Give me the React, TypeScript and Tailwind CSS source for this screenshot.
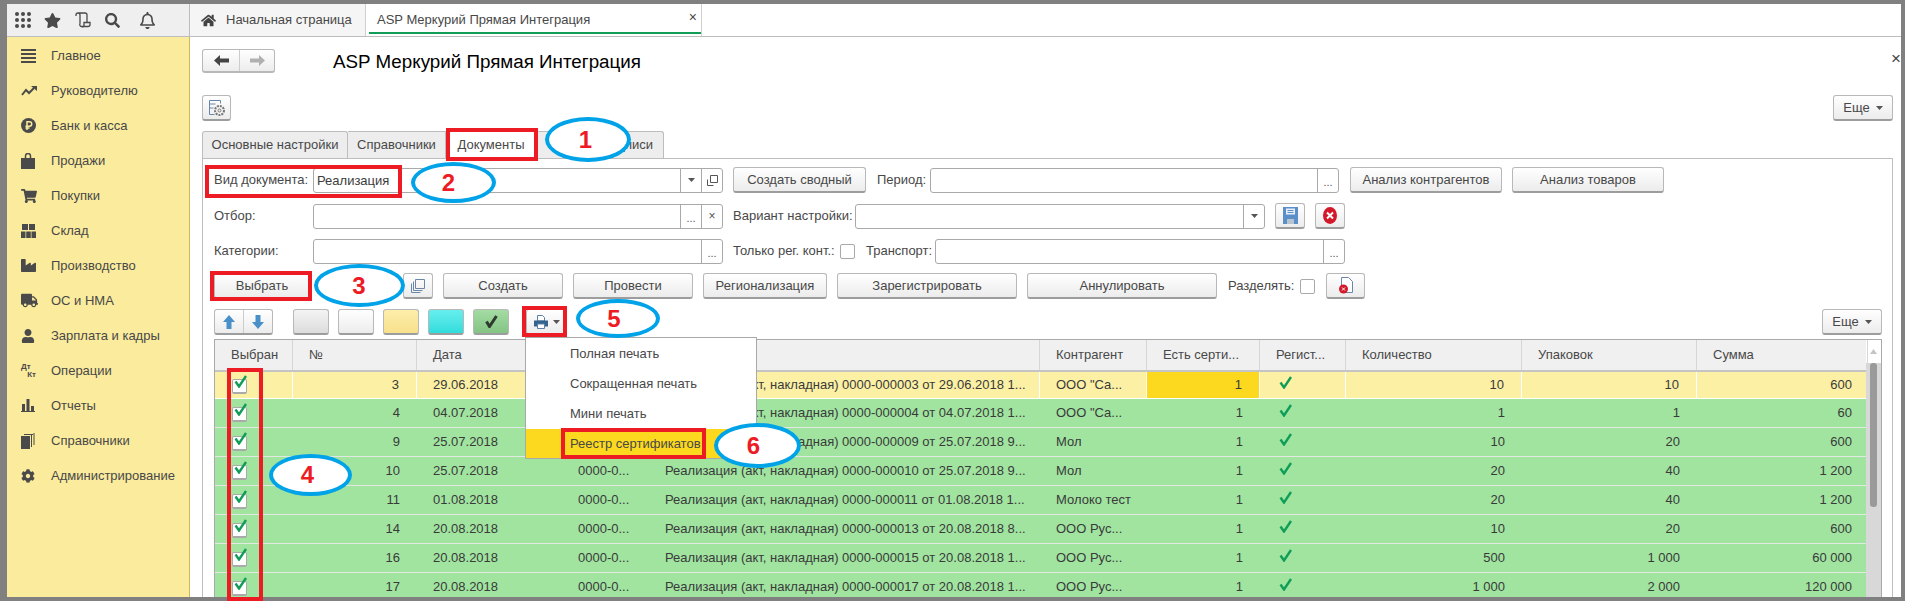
import React from 'react';
import { FaCog, FaHome, FaIndustry, FaSearch, FaShoppingCart, FaStar, FaTruck, FaUser, FaRegBell } from 'react-icons/fa';

const ICON = 'text-[#4a4a4a]';

const Caret = () => (
  <svg width="7" height="4" viewBox="0 0 7 4" className="shrink-0"><path d="M0 0h7L3.500 4z" fill="#555" /></svg>
);

const Check = () => (
  <svg width="14" height="13" viewBox="0 0 14 13"><path d="M1.500 6.500 5 11.500 12 1" fill="none" stroke="#0f9d58" strokeWidth="2.400" /></svg>
);

const sideItems: { label: string; icon: React.ReactNode }[] = [
  { label: 'Главное', icon: <svg width="15" height="14" viewBox="0 0 15 14" fill="#4a4a4a"><path d="M0 0h15v2H0zM0 4h15v2H0zM0 8h15v2H0zM0 12h15v2H0z" /></svg> },
  { label: 'Руководителю', icon: <svg width="16" height="10" viewBox="0 0 16 10"><path d="M1 9l4-5 3 3 5-5" fill="none" stroke="#4a4a4a" strokeWidth="2" /><path d="M10 0h6v5z" fill="#4a4a4a" /></svg> },
  { label: 'Банк и касса', icon: <svg width="15" height="15" viewBox="0 0 15 15"><circle cx="7.500" cy="7.500" r="7.500" fill="#4a4a4a" /><path d="M6 12V3.800h2.500a2 2 0 0 1 0 4.400H4.500M4.500 10h4" fill="none" stroke="#fbeb9d" strokeWidth="1.500" /></svg> },
  { label: 'Продажи', icon: <svg width="14" height="16" viewBox="0 0 14 16"><path d="M0 5h14v11H0z" fill="#4a4a4a" /><path d="M4.500 7V3a2.500 2.500 0 0 1 5 0v4" fill="none" stroke="#4a4a4a" strokeWidth="1.500" /></svg> },
  { label: 'Покупки', icon: <FaShoppingCart size={16} className={ICON} /> },
  { label: 'Склад', icon: <svg width="15" height="14" viewBox="0 0 15 14" fill="#4a4a4a"><path d="M1 0h6v6H1zM8 0h6v6H8zM0 7.500h4.500V14H0zM5.200 7.500h4.600V14H5.200zM10.500 7.500H15V14h-4.500z" /></svg> },
  { label: 'Производство', icon: <FaIndustry size={15} className={ICON} /> },
  { label: 'ОС и НМА', icon: <FaTruck size={17} className={ICON} /> },
  { label: 'Зарплата и кадры', icon: <FaUser size={14} className={ICON} /> },
  { label: 'Операции', icon: <div className="w-[15px] text-[8px] leading-[8px] font-bold text-[#4a4a4a]"><div>Дт</div><div className="text-right">Кт</div></div> },
  { label: 'Отчеты', icon: <svg width="14" height="13" viewBox="0 0 14 13" fill="#4a4a4a"><path d="M0 12h14v1H0zM1 5h3v7H1zM5.500 0h3v12h-3zM10 7h3v5h-3z" /></svg> },
  { label: 'Справочники', icon: <svg width="14" height="16" viewBox="0 0 14 16" fill="#4a4a4a"><path d="M0 3h9v13H0z" /><path d="M10 2h1v12h-1zM12.500 0h1v12h-1zM3 1h9v1H3z" /></svg> },
  { label: 'Администрирование', icon: <FaCog size={14} className={ICON} /> },
];

const Btn = ({ className = '', tone = 'from-white to-[#ececec]', children }: { className?: string; tone?: string; children?: React.ReactNode }) => (
  <div className={`h-[26px] shrink-0 flex items-center justify-center rounded-[3px] border border-[#b8b8b8] border-b-2 border-b-[#9d9d9d] bg-linear-to-b text-[#484848] ${tone} ${className}`}>
    {children}
  </div>
);

const Field = ({ className = '', text, btns = [] }: { className?: string; text?: string; btns?: string[] }) => (
  <div className={`h-[25px] shrink-0 flex rounded-[3px] border border-[#a9a9a9] bg-white ${className}`}>
    <div className="flex-1 px-[3px] leading-[23px] text-[#3c3c3c]">{text}</div>
    {btns.map((b, i) => (
      <div key={i} className="w-[21px] border-l border-[#a9a9a9] flex items-center justify-center text-[#555]">
        {b === 'caret' && <Caret />}
        {b === 'dots' && <span className="text-[11px] leading-[11px] mt-[5px]">...</span>}
        {b === 'x' && <span className="text-[12px] leading-[12px]">×</span>}
        {b === 'open' && (
          <svg width="11" height="11" viewBox="0 0 11 11" fill="none" stroke="#555"><path d="M3.500.5h7v7h-7zM.5 4.500v6h6" /></svg>
        )}
      </div>
    ))}
  </div>
);

const Box = () => <div className="w-[15px] h-[15px] shrink-0 rounded-[2px] border border-[#a9a9a9] bg-white" />;

const Label = ({ className = '', children }: { className?: string; children: React.ReactNode }) => (
  <div className={`shrink-0 whitespace-nowrap text-[#484848] ${className}`}>{children}</div>
);

const GRID = 'grid grid-cols-[78px_124px_150px_86px_387px_107px_113px_86px_176px_175px_171px]';

const DOC = 'Реализация (акт, накладная) ';
const rows = [
  ['3', '29.06.2018', DOC + '0000-000003 от 29.06.2018 1...', 'ООО "Са...', '10', '10', '600'],
  ['4', '04.07.2018', DOC + '0000-000004 от 04.07.2018 1...', 'ООО "Са...', '1', '1', '60'],
  ['9', '25.07.2018', DOC + '0000-000009 от 25.07.2018 9...', 'Мол', '10', '20', '600'],
  ['10', '25.07.2018', DOC + '0000-000010 от 25.07.2018 9...', 'Мол', '20', '40', '1 200'],
  ['11', '01.08.2018', DOC + '0000-000011 от 01.08.2018 1...', 'Молоко тест', '20', '40', '1 200'],
  ['14', '20.08.2018', DOC + '0000-000013 от 20.08.2018 8...', 'ООО Рус...', '10', '20', '600'],
  ['16', '20.08.2018', DOC + '0000-000015 от 20.08.2018 1...', 'ООО Рус...', '500', '1 000', '60 000'],
  ['17', '20.08.2018', DOC + '0000-000017 от 20.08.2018 1...', 'ООО Рус...', '1 000', '2 000', '120 000'],
];

const headers = ['Выбран', '№', 'Дата', '', '', 'Контрагент', 'Есть серти...', 'Регист...', 'Количество', 'Упаковок', 'Сумма'];

const Row = ({ r, first }: { r: string[]; first: boolean }) => {
  const sep = first ? 'border-r border-white' : '';
  const cell = `flex items-center whitespace-nowrap overflow-hidden ${sep}`;
  const num = `${cell} justify-end pr-[17px]`;
  return (
    <div className={`${GRID} ${first ? 'h-[27px] bg-[#fcf0a4] border-b border-white' : 'h-[29px] bg-[#a0e4a0] border-b border-[#e2e8e2]'} text-[#3a3a3a]`}>
      <div className={`${cell} pl-[17px] pt-[3px]`}>
        <div className="relative w-[15px] h-[15px] rounded-[2px] border border-[#aaa] border-b-2 bg-white">
          <div className="absolute left-[1px] top-[-5px]"><Check /></div>
        </div>
      </div>
      <div className={num}>{r[0]}</div>
      <div className={`${cell} pl-4`}>{r[1]}</div>
      <div className={`${cell} pl-[11px]`}>0000-0...</div>
      <div className={`${cell} pl-3`}>{r[2]}</div>
      <div className={`${cell} pl-4`}>{r[3]}</div>
      <div className={`${num} ${first ? 'bg-[#fcd91f]' : ''}`}>1</div>
      <div className={`${cell} pl-[19px] pb-[5px]`}><Check /></div>
      <div className={num}>{r[4]}</div>
      <div className={num}>{r[5]}</div>
      <div className={`flex items-center justify-end pr-[16px] whitespace-nowrap`}>{r[6]}</div>
    </div>
  );
};

const Ellipse = ({ className, n }: { className: string; n: string }) => (
  <div className={`absolute rounded-[50%] border-[4px] border-[#00a2e8] bg-white flex items-center justify-center text-[24px] font-bold text-[#ed1c24] ${className}`}>{n}</div>
);

const RedBox = ({ className }: { className: string }) => (
  <div className={`absolute border-[4px] border-[#ed1c24] ${className}`} />
);

export default function App() {
  return (
    <div className="relative w-[1905px] h-[601px] overflow-hidden bg-[#808080] pt-[4px] pl-[7px] pr-[4px] pb-[4px] text-[13px] font-['Liberation_Sans',Arial,sans-serif]">
      <div className="h-full flex flex-col bg-white overflow-hidden">
        {/* Top bar */}
        <div className="h-[33px] shrink-0 flex border-b border-[#bdbdbd] bg-white">
          <div className="w-[183px] flex items-center bg-[#efefef] border-r border-[#bdbdbd] text-[#4a4a4a]">
            <div className="ml-[8px] grid grid-cols-3 gap-[2px]">
              {Array.from({ length: 9 }).map((_, i) => <div key={i} className="w-[4px] h-[4px] rounded-full bg-[#4a4a4a]" />)}
            </div>
            <FaStar size={17} className="ml-[13px]" />
            <svg width="16" height="17" viewBox="0 0 16 17" fill="none" stroke="#4a4a4a" strokeWidth="1.300" className="ml-[14px]"><path d="M1 4V3a2 2 0 0 1 2-2h7a2 2 0 0 1 2 2M3 1a2 2 0 0 1 2 2v8.500a2 2 0 0 0 2 3h6a2 2 0 0 0 2-2v-2H9v2.500a2 2 0 0 1-2 2M12 3v7.500" /></svg>
            <FaSearch size={15} className="ml-[14px]" />
            <FaRegBell size={17} className="ml-[19px]" />
          </div>
          <div className="w-[176px] flex items-center bg-[#f5f5f5] border-r border-[#cfcfcf] text-[#484848]">
            <FaHome size={15} className="ml-[11px] text-[#444]" />
            <span className="ml-[10px] whitespace-nowrap">Начальная страница</span>
          </div>
          <div className="relative w-[336px] flex items-center border-r border-[#cfcfcf] text-[#484848]">
            <span className="ml-[11px] whitespace-nowrap">ASP Меркурий Прямая Интеграция</span>
            <span className="absolute right-[4px] top-[6px] text-[14px] leading-[14px]">×</span>
            <div className="absolute left-[3px] right-0 bottom-[2px] h-[2px] bg-[#0f9d58]" />
          </div>
        </div>

        <div className="flex-1 min-h-0 flex">
          {/* Sidebar */}
          <div className="w-[183px] shrink-0 pt-[1px] bg-[#fbeb9d] border-r border-[#cdb95a]">
            {sideItems.map((s) => (
              <div key={s.label} className="h-[35px] flex items-center text-[#484848]">
                <div className="w-[44px] pl-[14px] shrink-0 flex items-center">{s.icon}</div>
                <span className="whitespace-nowrap">{s.label}</span>
              </div>
            ))}
          </div>

          {/* Form */}
          <div className="relative flex-1 min-w-0 pl-[12px] pr-[8px]">
            <span className="absolute right-0 top-[13px] text-[17px] leading-[17px] text-[#444]">×</span>
            <div className="mt-[12px] h-[24px] flex items-center">
              <div className="w-[73px] h-[24px] flex rounded-[3px] border border-[#b8b8b8] border-b-2 bg-linear-to-b from-white to-[#ececec]">
                <div className="w-[37px] border-r border-[#ccc] flex items-center justify-center">
                  <svg width="15" height="11" viewBox="0 0 15 11" fill="#444"><path d="M0 5.500 6 0v3.500h9v4H6V11z" /></svg>
                </div>
                <div className="flex-1 flex items-center justify-center">
                  <svg width="15" height="11" viewBox="0 0 15 11" fill="#b0b0b0"><path d="M15 5.500 9 0v3.500H0v4h9V11z" /></svg>
                </div>
              </div>
              <div className="ml-[58px] mt-[3px] text-[18.8px] text-black whitespace-nowrap">ASP Меркурий Прямая Интеграция</div>
            </div>

            <div className="mt-[22px] h-[26px] flex items-center justify-between">
              <Btn className="w-[29px]">
                <svg width="18" height="18" viewBox="0 0 18 18" fill="none" stroke="#6a86a8"><path d="M1.500 1.500h11v3M1.500 1.500v14h5M1.500 5h6M1.500 9h4" /><circle cx="11.500" cy="11.500" r="4.500" stroke="#777" strokeWidth="2" strokeDasharray="2 1" /><circle cx="11.500" cy="11.500" r="1.500" stroke="#777" /></svg>
              </Btn>
              <Btn className="w-[60px] gap-[6px]"><span>Еще</span><Caret /></Btn>
            </div>

            {/* Tabs */}
            <div className="mt-[10px] h-[27px] flex text-[#484848]">
              <div className="w-[146px] rounded-t-[3px] border border-b-0 border-[#bdbdbd] bg-[#ededed] flex items-center justify-center">Основные настройки</div>
              <div className="w-[98px] border-t border-r border-[#bdbdbd] bg-[#ededed] flex items-center justify-center">Справочники</div>
              <div className="w-[90px] bg-white border-t border-[#bdbdbd] flex items-center justify-center">Документы</div>
              <div className="w-[128px] rounded-t-[3px] border border-b-0 border-[#bdbdbd] bg-[#ededed] flex items-center justify-end pr-[10px]">Подписи</div>
            </div>

            {/* Panel */}
            <div className="h-[500px] border border-b-0 border-[#bdbdbd] pl-[11px] pr-[10px] pt-[8px]">
              <div className="h-[26px] flex items-center">
                <Label className="w-[99px]">Вид документа:</Label>
                <Field className="w-[410px]" text="Реализация" btns={['caret', 'open']} />
                <Btn className="ml-[10px] w-[133px]">Создать сводный</Btn>
                <Label className="ml-[11px] w-[53px]">Период:</Label>
                <Field className="w-[409px]" btns={['dots']} />
                <Btn className="ml-[11px] w-[152px]">Анализ контрагентов</Btn>
                <Btn className="ml-[10px] w-[152px]">Анализ товаров</Btn>
              </div>
              <div className="mt-[10px] h-[26px] flex items-center">
                <Label className="w-[99px]">Отбор:</Label>
                <Field className="w-[410px]" btns={['dots', 'x']} />
                <Label className="ml-[10px] w-[122px]">Вариант настройки:</Label>
                <Field className="w-[410px]" btns={['caret']} />
                <Btn className="ml-[10px] w-[30px]">
                  <svg width="15" height="17" viewBox="0 0 15 17"><path d="M0 0h15v17H0z" fill="#5b8fc9" /><path d="M3 1.500h9v6H3z" fill="#e8eff7" /><path d="M4 12h7v5H4z" fill="#b8c4cf" /><path d="M4.500 3.500h6M4.500 5.500h6" stroke="#5b8fc9" /></svg>
                </Btn>
                <Btn className="ml-[10px] w-[30px]">
                  <svg width="14" height="17" viewBox="0 0 14 17"><ellipse cx="7" cy="8.500" rx="7" ry="8.500" fill="#d3182a" /><path d="M4 5.500l6 6M10 5.500l-6 6" stroke="#fff" strokeWidth="2" /></svg>
                </Btn>
              </div>
              <div className="mt-[9px] h-[26px] flex items-center">
                <Label className="w-[99px]">Категории:</Label>
                <Field className="w-[410px]" btns={['dots']} />
                <Label className="ml-[10px] w-[107px]">Только рег. конт.:</Label>
                <Box />
                <Label className="ml-[11px] w-[69px]">Транспорт:</Label>
                <Field className="w-[410px]" btns={['dots']} />
              </div>
              <div className="mt-[9px] h-[26px] flex items-center">
                <Btn className="w-[96px]">Выбрать</Btn>
                <Btn className="ml-[93px] w-[30px]">
                  <svg width="14" height="14" viewBox="0 0 14 14" fill="none" stroke="#6a86a8"><path d="M4.500.5h9v9h-9zM2.500 2.500v9h9M.5 4.500v9h9" /></svg>
                </Btn>
                <Btn className="ml-[10px] w-[120px]">Создать</Btn>
                <Btn className="ml-[10px] w-[120px]">Провести</Btn>
                <Btn className="ml-[10px] w-[124px]">Регионализация</Btn>
                <Btn className="ml-[10px] w-[180px]">Зарегистрировать</Btn>
                <Btn className="ml-[10px] w-[190px]">Аннулировать</Btn>
                <Label className="ml-[11px] w-[72px]">Разделять:</Label>
                <Box />
                <Btn className="ml-[11px] w-[39px]">
                  <svg width="14" height="17" viewBox="0 0 14 17"><path d="M2.500.5h7l4 4v11h-11z" fill="#fff" stroke="#6a86a8" /><circle cx="4.500" cy="12" r="4.500" fill="#d3182a" /><path d="M3 10.500l3 3M6 10.500l-3 3" stroke="#fff" /></svg>
                </Btn>
              </div>
              <div className="mt-[10px] h-[26px] flex items-center">
                <div className="w-[59px] h-[26px] flex rounded-[3px] border border-[#b8b8b8] border-b-2 border-b-[#9d9d9d] bg-linear-to-b from-white to-[#ececec]">
                  <div className="w-[29px] border-r border-[#ccc] flex items-center justify-center">
                    <svg width="12" height="14" viewBox="0 0 12 14" fill="#4a90c8"><path d="M6 0l6 7H8.500v7h-5V7H0z" /></svg>
                  </div>
                  <div className="flex-1 flex items-center justify-center">
                    <svg width="12" height="14" viewBox="0 0 12 14" fill="#4a90c8"><path d="M6 14l6-7H8.500V0h-5v7H0z" /></svg>
                  </div>
                </div>
                <Btn className="ml-[20px] w-[36px]" tone="from-[#f4f4f4] to-[#dcdcdc]" />
                <Btn className="ml-[9px] w-[36px]" />
                <Btn className="ml-[9px] w-[36px]" tone="from-[#fdeeaa] to-[#f8e08c]" />
                <Btn className="ml-[9px] w-[36px]" tone="from-[#66eeee] to-[#2fdcdc]" />
                <Btn className="ml-[9px] w-[36px]" tone="from-[#a4dca4] to-[#84c484]">
                  <svg width="13" height="13" viewBox="0 0 13 13"><path d="M1.500 6.500l3 5L11.500 1" fill="none" stroke="#2f3a2f" strokeWidth="3" /></svg>
                </Btn>
                <Btn className="ml-[17px] w-[41px] gap-[5px]">
                  <svg width="14" height="14" viewBox="0 0 14 14"><path d="M3.500.5h5l2 2V6h-7z" fill="#fff" stroke="#5b7fa6" /><path d="M0 5.500h14v6H0z" fill="#35628f" /><path d="M3.500 9h7v4.500h-7z" fill="#fff" stroke="#5b7fa6" /></svg>
                  <Caret />
                </Btn>
                <Btn className="ml-auto w-[60px] gap-[6px]"><span>Еще</span><Caret /></Btn>
              </div>

              {/* Table */}
              <div className="mt-[4px] flex border-t border-l border-r border-[#a9a9a9] text-[13px]">
                <div className="flex-1 min-w-0">
                  <div className={`${GRID} h-[32px] bg-[#f0f0f0] border-b-2 border-[#c4c4c4] text-[#484848]`}>
                    {headers.map((h, i) => (
                      <div key={i} className="flex items-center pl-4 border-r border-[#d6d6d6] whitespace-nowrap">{h}</div>
                    ))}
                  </div>
                  {rows.map((r, i) => <Row key={i} r={r} first={i === 0} />)}
                </div>
                <div className="w-[15px] shrink-0 flex flex-col">
                  <div className="h-[23px] flex justify-center pt-[9px]">
                    <svg width="7" height="5" viewBox="0 0 7 5"><path d="M3.500 0 7 5H0z" fill="#c4c4c4" /></svg>
                  </div>
                  <div className="flex-1 bg-[#d8d8d8] flex justify-center">
                    <div className="w-[7px] h-[144px] rounded-[3px] bg-[#9a9a9a]" />
                  </div>
                </div>
              </div>
            </div>
          </div>
        </div>
      </div>

      {/* Print menu */}
      <div className="absolute left-[525px] top-[337px] w-[232px] h-[122px] bg-white border border-[#a9a9a9] text-[#484848]">
        <div className="h-[30px] flex items-center pl-[44px] mt-[1px]">Полная печать</div>
        <div className="h-[30px] flex items-center pl-[44px]">Сокращенная печать</div>
        <div className="h-[30px] flex items-center pl-[44px]">Мини печать</div>
        <div className="h-[29px] flex items-center pl-[44px] bg-[#fcd91f]">Реестр сертификатов</div>
      </div>

      {/* Annotations */}
      <RedBox className="left-[446px] top-[128px] w-[92px] h-[33px]" />
      <RedBox className="left-[205px] top-[165px] w-[197px] h-[33px]" />
      <RedBox className="left-[210px] top-[271px] w-[102px] h-[30px]" />
      <RedBox className="left-[227px] top-[368px] w-[36px] h-[233px]" />
      <RedBox className="left-[522px] top-[306px] w-[45px] h-[31px]" />
      <RedBox className="left-[561px] top-[428px] w-[145px] h-[31px]" />
      <Ellipse className="left-[545px] top-[117px] w-[86px] h-[45px] pr-[5px]" n="1" />
      <Ellipse className="left-[411px] top-[162px] w-[85px] h-[41px] pr-[10px]" n="2" />
      <Ellipse className="left-[314px] top-[264px] w-[91px] h-[43px] pr-[1px]" n="3" />
      <Ellipse className="left-[269px] top-[454px] w-[83px] h-[42px] pr-[6px]" n="4" />
      <Ellipse className="left-[576px] top-[299px] w-[84px] h-[39px] pr-[8px]" n="5" />
      <Ellipse className="left-[714px] top-[423px] w-[87px] h-[45px] pr-[8px]" n="6" />
    </div>
  );
}
